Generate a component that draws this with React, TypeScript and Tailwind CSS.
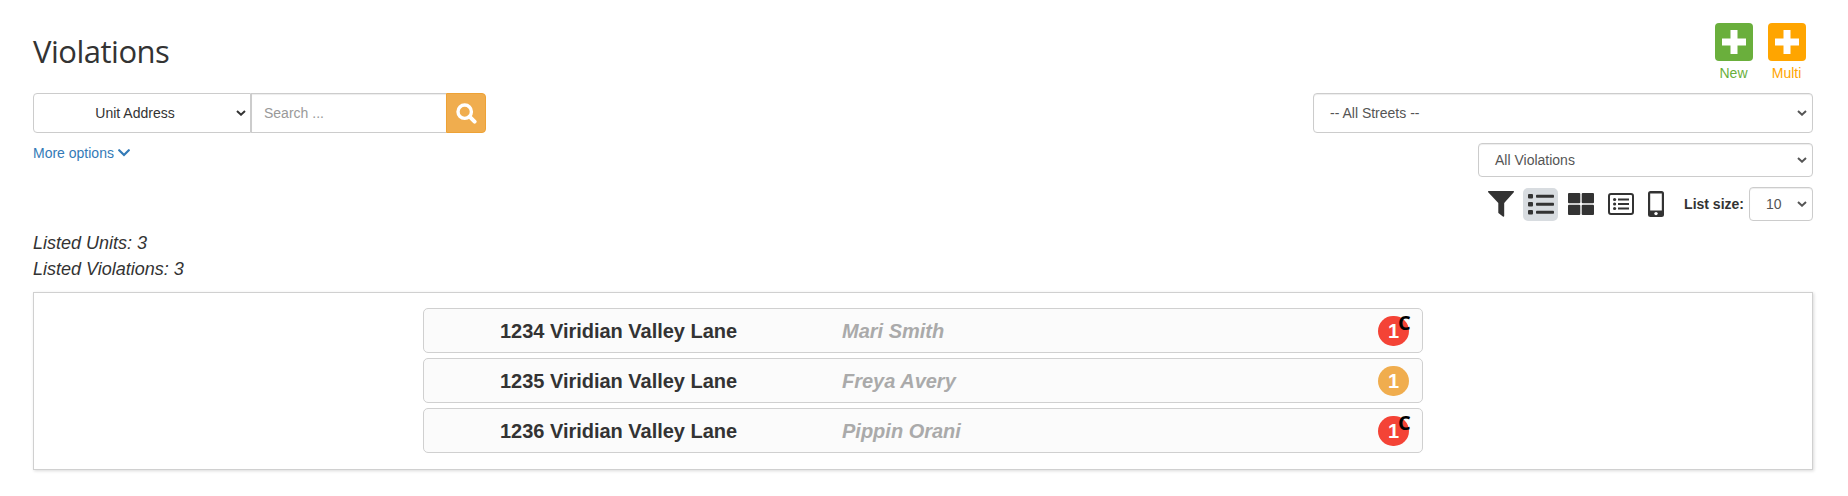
import { type ReactNode } from 'react'

interface UnitRow {
  address: string
  owner: string
  count: number
  severity: 'red' | 'amber'
  flag?: string
}

const units: UnitRow[] = [
  { address: '1234 Viridian Valley Lane', owner: 'Mari Smith', count: 1, severity: 'red', flag: 'C' },
  { address: '1235 Viridian Valley Lane', owner: 'Freya Avery', count: 1, severity: 'amber' },
  { address: '1236 Viridian Valley Lane', owner: 'Pippin Orani', count: 1, severity: 'red', flag: 'C' }
]

const Caret = ({ className }: { className?: string }) => (
  <svg viewBox="0 0 10 6" className={`h-[6px] w-[10px] shrink-0 ${className ?? ''}`}>
    <path d="M1 1 L5 4.7 L9 1" fill="none" stroke="currentColor" strokeWidth="2" />
  </svg>
)

const SelectBox = ({ className, children }: { className: string; children: ReactNode }) => (
  <div
    className={`flex items-center justify-between rounded border border-[#ccc] bg-white pr-[5px] text-sm text-[#555] shadow-[inset_0_1px_1px_rgba(0,0,0,0.075)] ${className}`}
  >
    <span>{children}</span>
    <Caret />
  </div>
)

const AddButton = ({ label, className }: { label: string; className: string }) => (
  <button className={`flex w-[53px] flex-col items-center ${className}`}>
    <svg viewBox="0 0 38 38" className="size-[38px]">
      <rect width="38" height="38" rx="4" fill="currentColor" />
      <path d="M15.5 7h7v8.5H31v7h-8.5V31h-7v-8.5H7v-7h8.5z" fill="#fff" />
    </svg>
    <span className="mt-[2px] text-sm leading-5">{label}</span>
  </button>
)

const SearchIcon = () => (
  <svg viewBox="0 0 21 21" className="size-[21px]" fill="none" stroke="currentColor">
    <circle cx="8.7" cy="8.7" r="6.7" strokeWidth="3.4" />
    <path d="M13.6 13.6 L18.6 18.6" strokeWidth="4" strokeLinecap="round" />
  </svg>
)

const FunnelIcon = () => (
  <svg viewBox="0 0 26 26" className="h-[26px] w-[26px]" fill="currentColor">
    <path d="M.6 0h24.8c.6 0 .8.7.4 1.2L16.2 12v13c0 .7-.8 1-1.3.6l-4.2-3.4c-.3-.2-.4-.5-.4-.8V12L.2 1.2C-.2.7 0 0 .6 0z" />
  </svg>
)

const ListIcon = () => (
  <svg viewBox="0 0 26 22" className="h-[22px] w-[26px]" fill="currentColor">
    <rect y="1" width="5" height="4.4" rx="1" />
    <rect y="9" width="5" height="4.4" rx="1" />
    <rect y="17" width="5" height="4.4" rx="1" />
    <rect x="8" y="1.7" width="18" height="3" rx="0.8" />
    <rect x="8" y="9.7" width="18" height="3" rx="0.8" />
    <rect x="8" y="17.7" width="18" height="3" rx="0.8" />
  </svg>
)

const GridIcon = () => (
  <svg viewBox="0 0 26 22" className="h-[22px] w-[26px]" fill="currentColor">
    <rect width="12.3" height="10.3" rx="1" />
    <rect x="13.7" width="12.3" height="10.3" rx="1" />
    <rect y="11.7" width="12.3" height="10.3" rx="1" />
    <rect x="13.7" y="11.7" width="12.3" height="10.3" rx="1" />
  </svg>
)

const CardIcon = () => (
  <svg viewBox="0 0 26 22" className="h-[22px] w-[26px]" fill="currentColor">
    <rect x="1" y="1" width="24" height="20" rx="2" fill="none" stroke="currentColor" strokeWidth="2" />
    <circle cx="6.6" cy="6.5" r="1.6" />
    <circle cx="6.6" cy="11" r="1.6" />
    <circle cx="6.6" cy="15.5" r="1.6" />
    <path d="M10 5.5h11v2H10zM10 10h11v2H10zM10 14.5h11v2H10z" />
  </svg>
)

const PhoneIcon = () => (
  <svg viewBox="0 0 16 26" className="h-[26px] w-[16px]">
    <rect width="16" height="26" rx="2.5" fill="currentColor" />
    <rect x="2.2" y="2.5" width="11.6" height="17" fill="#fff" />
    <circle cx="8" cy="22.6" r="1.7" fill="#fff" />
  </svg>
)

const UnitCard = ({ unit }: { unit: UnitRow }) => (
  <div className="flex h-[45px] items-center rounded-[5px] border border-[#d0d0d0] bg-[#fbfbfb] pr-[13px] text-xl font-bold">
    <span className="ml-[76px] w-[342px] tracking-[-0.02px]">{unit.address}</span>
    <span className="flex-1 text-[#aaa] italic">{unit.owner}</span>
    <span
      className={`relative flex h-[30px] w-[31px] items-center justify-center rounded-full text-white ${
        unit.severity === 'red' ? 'bg-[#f44336]' : 'bg-[#f0ad4e]'
      }`}
    >
      {unit.count}
      {unit.flag && (
        <span className="absolute -top-[4px] left-[20px] font-['Open_Sans',sans-serif] text-[20px] leading-[22px] text-black">
          {unit.flag}
        </span>
      )}
    </span>
  </div>
)

export default function App() {
  return (
    <div className="h-[496px] bg-white pt-[23px] pr-[35px] pl-[33px] font-['Liberation_Sans',Arial,sans-serif] text-[#333]">
      <div className="flex h-[70px] justify-between">
        <h1 className="mt-[8px] font-['Open_Sans',sans-serif] text-[31px] leading-[40px] tracking-[-0.5px]">Violations</h1>
        <div className="flex">
          <AddButton label="New" className="text-[#6aaf3c]" />
          <AddButton label="Multi" className="text-[#ffa500]" />
        </div>
      </div>

      <div className="flex justify-between">
        <div>
          <div className="flex h-10 text-sm">
            <div className="flex w-[218px] items-center rounded-l border border-[#ccc] pr-[4px]">
              <span className="flex-1 text-center">Unit Address</span>
              <Caret />
            </div>
            <div className="flex w-[195px] items-center border border-r-0 border-[#ccc] pl-3 text-[#999] shadow-[inset_0_1px_1px_rgba(0,0,0,0.075)]">
              Search ...
            </div>
            <button className="flex w-10 items-center justify-center rounded-r border border-[#eea236] bg-[#f0ad4e] text-white">
              <SearchIcon />
            </button>
          </div>
          <a className="mt-[10px] flex items-center gap-1 text-sm leading-5 text-[#337ab7]">
            More options
            <svg viewBox="0 0 12 8" className="h-2 w-3">
              <path d="M1.2 1.2 L6 6 L10.8 1.2" fill="none" stroke="currentColor" strokeWidth="2.2" strokeLinecap="round" />
            </svg>
          </a>
        </div>

        <div className="flex flex-col items-end">
          <SelectBox className="h-10 w-[500px] pl-4">-- All Streets --</SelectBox>
          <SelectBox className="mt-[10px] h-[34px] w-[335px] pl-4">All Violations</SelectBox>
          <div className="mt-[10px] flex h-[34px] items-center">
            <span className="mr-[9px]">
              <FunnelIcon />
            </span>
            <span className="mr-[10px] flex h-[33px] w-[35px] items-center justify-center rounded-[5px] bg-[#d8dce0]">
              <ListIcon />
            </span>
            <span className="mr-[14px]">
              <GridIcon />
            </span>
            <span className="mr-[14px]">
              <CardIcon />
            </span>
            <PhoneIcon />
            <span className="mr-[5px] ml-[20px] text-sm font-bold">List size:</span>
            <SelectBox className="h-[34px] w-16 pl-4">10</SelectBox>
          </div>
        </div>
      </div>

      <div className="mt-[9px] text-lg leading-[26px] italic">
        <p>Listed Units: 3</p>
        <p>Listed Violations: 3</p>
      </div>

      <div className="mt-[10px] flex h-[178px] flex-col items-center border border-[#d0d0d0] pt-[15px] shadow-[1px_1px_3px_rgba(0,0,0,0.15)]">
        <div className="flex w-[1000px] flex-col gap-[5px]">
          {units.map((unit) => (
            <UnitCard key={unit.address} unit={unit} />
          ))}
        </div>
      </div>
    </div>
  )
}
